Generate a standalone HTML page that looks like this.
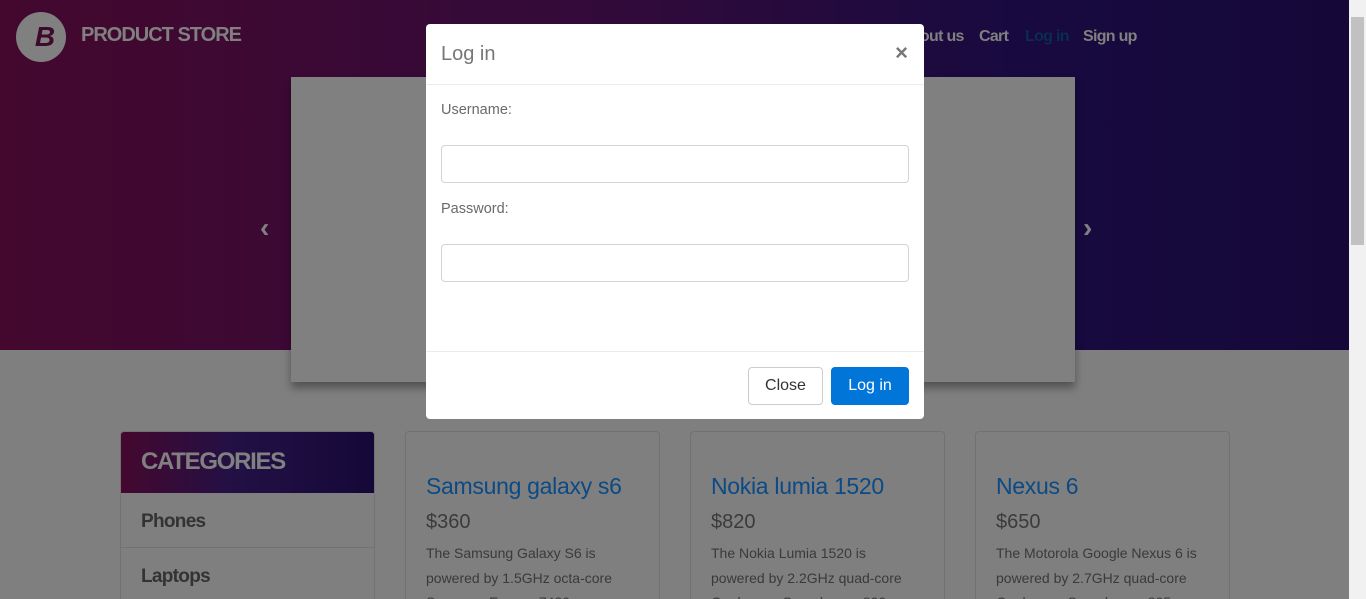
<!DOCTYPE html>
<html><head><meta charset="utf-8"><style>
*{box-sizing:border-box;margin:0;padding:0}
html,body{width:1366px;height:599px;overflow:hidden}
body{background:#7f7f7f;font-family:"Liberation Sans",sans-serif;position:relative}
.hdr{position:absolute;left:0;top:0;width:1349px;height:350px;background:linear-gradient(90deg,#44082e 0%,#320a3a 45%,#180a40 75%,#150838 100%)}
.logo{position:absolute;left:16px;top:12px;width:50px;height:50px;border-radius:50%;background:#808080;color:#40082c;font:italic bold 28px "Liberation Sans",sans-serif;text-align:center;line-height:50px;padding-left:8px}
.brand{position:absolute;left:81px;top:24px;font-weight:bold;font-size:20px;color:#808080;letter-spacing:-1px}
.nav{position:absolute;top:28px;font-weight:bold;font-size:16px;color:#808080;letter-spacing:-0.7px}
.car{position:absolute;left:291px;top:77px;width:784px;height:305px;background:#808080;box-shadow:0 6px 8px rgba(0,0,0,.35)}
.arr{position:absolute;top:212px;color:#808080;font-size:28px;font-weight:bold}
.cat{position:absolute;left:120px;top:431px;width:255px;height:168px;border:1px solid #727272;border-bottom:none;border-radius:4px 4px 0 0;overflow:hidden}
.cat .h{height:61px;background:linear-gradient(90deg,#44082e,#221045 45%,#150838);color:#808080;font-weight:bold;font-size:24px;padding:16px 20px;letter-spacing:-1.3px}
.cat .i{height:55px;border-bottom:1px solid #727272;padding:18px 20px;font-size:19px;font-weight:bold;color:#333;letter-spacing:-0.7px}
.card{position:absolute;top:431px;width:255px;height:168px;border:1px solid #727272;border-bottom:none;border-radius:4px 4px 0 0;padding:41px 28px 0 20px;overflow:hidden}
.card h4{font-weight:normal;font-size:23px;color:#0b4a85;margin-bottom:11px;letter-spacing:-0.3px;white-space:nowrap}
.card h5{font-weight:normal;font-size:20px;color:#3b3b3b;margin-bottom:7px}
.card p{font-size:14px;color:#3a3a3a;line-height:24.5px}
.sb{position:absolute;left:1349px;top:0;width:17px;height:599px;background:#f1f1f1}
.sb .t{position:absolute;left:2px;top:17px;width:13px;height:228px;background:#c1c1c1}
.modal{position:absolute;left:426px;top:24px;width:498px;height:395px;background:#fff;border-radius:4px;color:#6a6a6a}
.mh{height:61px;border-bottom:1px solid #e9ecef;padding:19px 15px;font-size:20px;color:#777}
.x{position:absolute;right:16px;top:16px;font-size:22px;font-weight:bold;color:#777}
label{position:absolute;left:15px;font-size:14.5px;color:#6a6a6a}
.in{position:absolute;left:15px;width:468px;height:38px;border:1px solid #ced4da;border-radius:4px}
.mf{position:absolute;left:0;top:327px;width:498px;border-top:1px solid #e9ecef}
.btn{position:absolute;top:343px;height:38px;border-radius:4px;font-size:16px;text-align:center;line-height:36px}
</style></head><body>
<div class="hdr"></div>
<div class="logo">B</div>
<div class="brand">PRODUCT STORE</div>
<div class="nav" style="left:900px">About us</div>
<div class="nav" style="left:979px">Cart</div>
<div class="nav" style="left:1025px;color:#0a2c4e">Log in</div>
<div class="nav" style="left:1083px">Sign up</div>
<div class="car"></div>
<div class="arr" style="left:260px">&#x2039;</div>
<div class="arr" style="left:1083px">&#x203A;</div>
<div class="cat"><div class="h">CATEGORIES</div><div class="i">Phones</div><div class="i">Laptops</div></div>
<div class="card" style="left:405px"><h4>Samsung galaxy s6</h4><h5>$360</h5><p>The Samsung Galaxy S6 is powered by 1.5GHz octa-core Samsung Exynos 7420 processor</p></div>
<div class="card" style="left:690px"><h4>Nokia lumia 1520</h4><h5>$820</h5><p>The Nokia Lumia 1520 is powered by 2.2GHz quad-core Qualcomm Snapdragon 800</p></div>
<div class="card" style="left:975px"><h4>Nexus 6</h4><h5>$650</h5><p>The Motorola Google Nexus 6 is powered by 2.7GHz quad-core Qualcomm Snapdragon 805</p></div>
<div class="sb"><div class="t"></div></div>
<div class="modal">
<div class="mh">Log in</div><div class="x">×</div>
<label style="top:78px">Username:</label>
<div class="in" style="top:121px"></div>
<label style="top:177px">Password:</label>
<div class="in" style="top:220px"></div>
<div class="mf"></div>
<div class="btn" style="left:322px;width:75px;border:1px solid #ccc;color:#333">Close</div>
<div class="btn" style="left:405px;width:78px;background:#0275d8;color:#fff;border:1px solid #0275d8">Log in</div>
</div>
</body></html>
